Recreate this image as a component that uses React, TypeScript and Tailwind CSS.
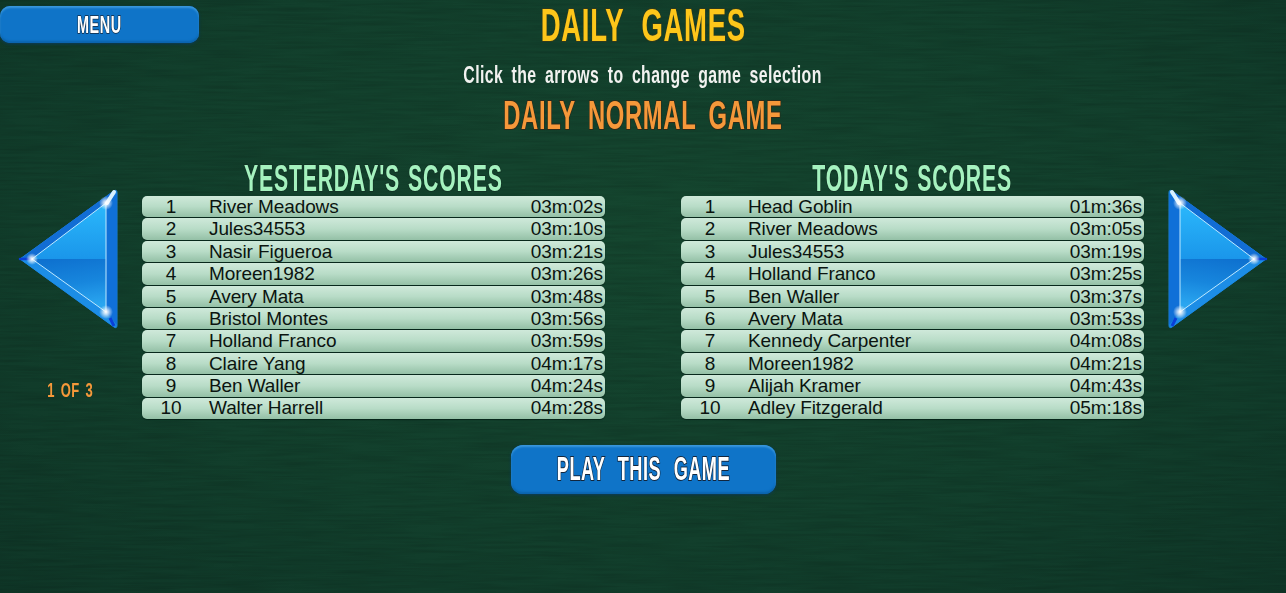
const yesterday: [string, string][] = [
  ["River Meadows", "03m:02s"],
  ["Jules34553", "03m:10s"],
  ["Nasir Figueroa", "03m:21s"],
  ["Moreen1982", "03m:26s"],
  ["Avery Mata", "03m:48s"],
  ["Bristol Montes", "03m:56s"],
  ["Holland Franco", "03m:59s"],
  ["Claire Yang", "04m:17s"],
  ["Ben Waller", "04m:24s"],
  ["Walter Harrell", "04m:28s"],
];
const today: [string, string][] = [
  ["Head Goblin", "01m:36s"],
  ["River Meadows", "03m:05s"],
  ["Jules34553", "03m:19s"],
  ["Holland Franco", "03m:25s"],
  ["Ben Waller", "03m:37s"],
  ["Avery Mata", "03m:53s"],
  ["Kennedy Carpenter", "04m:08s"],
  ["Moreen1982", "04m:21s"],
  ["Alijah Kramer", "04m:43s"],
  ["Adley Fitzgerald", "05m:18s"],
];

function Arrow({ flip }: { flip?: boolean }) {
  const id = flip ? "r" : "l";
  return (
    <svg viewBox="0 0 100 142" className={flip ? "block w-[100px] h-[142px] -scale-x-100 blur-[0.4px]" : "block w-[100px] h-[142px] blur-[0.4px]"}>
      <defs>
        <linearGradient id={id + "up"} x1="0" y1="0" x2="0" y2="1">
          <stop offset="0" stopColor="#2bb8fc" />
          <stop offset="1" stopColor="#1a96ea" />
        </linearGradient>
        <linearGradient id={id + "down"} x1="0" y1="0" x2="0.2" y2="1">
          <stop offset="0" stopColor="#0d6fce" />
          <stop offset="0.55" stopColor="#1786dd" />
          <stop offset="1" stopColor="#2aa6f0" />
        </linearGradient>
        <radialGradient id={id + "glow"}>
          <stop offset="0" stopColor="#ffffff" />
          <stop offset="0.35" stopColor="#ffffff" stopOpacity="0.7" />
          <stop offset="1" stopColor="#ffffff" stopOpacity="0" />
        </radialGradient>
      </defs>
      <path d="M2 71 L96 3 Q99 1 99 5 L99 137 Q99 141 96 139 Z" fill="#1a85e0" stroke="#1a85e0" strokeWidth="1" strokeLinejoin="round" />
      <path d="M2 71 L95 3 L88 15 L14 71 Z" fill="#126dd4" />
      <path d="M2 71 L14 71 L88 124 L96 139 Z" fill="#1c8de6" />
      <path d="M99 5 L99 137 L88 124 L88 15 Z" fill="#1070d8" />
      <path d="M14 71 L88 15 L88 71 Z" fill={`url(#${id}up)`} />
      <path d="M14 71 L88 71 L88 124 Z" fill={`url(#${id}down)`} />
      <path d="M14 71 L88 15 L88 124 Z" fill="none" stroke="#bfe9ff" strokeWidth="1" strokeLinejoin="round" />
      <path d="M2 71 L12 71" stroke="#0a3fd8" strokeWidth="2.5" strokeLinecap="round" />
      <path d="M92 130 L96 138" stroke="#0a3fd8" strokeWidth="3" />
      <path d="M89 15 L96 4" stroke="#d8f0ff" strokeWidth="4" strokeLinecap="round" />
      <circle cx="14" cy="71" r="6" fill={`url(#${id}glow)`} />
      <circle cx="88" cy="15" r="7" fill={`url(#${id}glow)`} />
      <circle cx="88" cy="124" r="7" fill={`url(#${id}glow)`} />
    </svg>
  );
}

function ScoreTable({ title, rows }: { title: string; rows: [string, string][] }) {
  return (
    <div className="w-[463px]">
      <div className="h-[35px] flex justify-center">
        <h2 className="h-[35px] inline-block scale-x-[0.59] whitespace-nowrap font-['Liberation_Sans',sans-serif] font-bold text-[36px] leading-[35px] text-[#a5f2bf] tracking-[1.4px] [word-spacing:2px] [paint-order:stroke_fill] [-webkit-text-stroke:2px_#123325]">
          {title}
        </h2>
      </div>
      <div className="flex flex-col gap-px font-['Liberation_Sans',sans-serif] text-[19px] tracking-[-0.1px] text-[#0b1410]">
        {rows.map(([name, time], i) => (
          <div
            key={name}
            className="flex items-center pt-px h-[21.4px] rounded-[5px] bg-gradient-to-b from-[#cfe9da] via-[#b8dcc7] to-[#94c0a6] shadow-[0_1px_1px_#07251a]"
          >
            <span className="w-[58px] text-center">{i + 1}</span>
            <span className="ml-[9px] flex-1">{name}</span>
            <span className="mr-[2px]">{time}</span>
          </div>
        ))}
      </div>
    </div>
  );
}

const display = "font-['Liberation_Sans',sans-serif]";
const blueButton =
  "flex items-center justify-center bg-[#0f74c8] shadow-[inset_0_2px_2px_#3a97dc,inset_0_-2px_2px_#0c64ad,0_1px_3px_#0b3b5c]";

export default function App() {
  return (
    <div className="relative w-[1286px] h-[593px] overflow-hidden bg-[radial-gradient(ellipse_at_50%_40%,#15462f_0%,#123f2c_60%,#0f3627_100%)]">
      <svg className="absolute inset-0 w-full h-full pointer-events-none opacity-[0.14]">
        <filter id="grain">
          <feTurbulence type="fractalNoise" baseFrequency="0.015 0.35" numOctaves="3" seed="4" />
          <feColorMatrix values="0 0 0 0 0  0 0 0 0 0  0 0 0 0 0  1.6 0 0 0 -0.55" />
        </filter>
        <rect width="100%" height="100%" filter="url(#grain)" />
      </svg>

      <div className="relative">
        <div className="grid grid-cols-[200px_1fr_200px]">
          <div className="pt-[6px]">
            <button className={`${blueButton} w-[199px] h-[37px] rounded-[10px]`}>
              <span className={`${display} inline-block scale-x-[0.6] font-bold text-[24px] leading-[30px] text-white tracking-[1px] [paint-order:stroke_fill] [-webkit-text-stroke:1.5px_#12263d]`}>
                MENU
              </span>
            </button>
          </div>
          <div className="flex flex-col items-center">
            <h1 className={`${display} h-[48px] inline-block scale-x-[0.585] whitespace-nowrap font-bold text-[47px] leading-[50px] text-[#fdc61a] tracking-[1.2px] [word-spacing:16px] [paint-order:stroke_fill] [-webkit-text-stroke:2px_#2d3a1e]`}>
              DAILY GAMES
            </h1>
            <p className={`${display} mt-[10px] h-[34px] inline-block scale-x-[0.66] whitespace-nowrap font-bold text-[24px] leading-[34px] text-[#f2f2f0] tracking-[0.6px] [word-spacing:5.5px]`}>
              Click the arrows to change game selection
            </p>
            <h2 className={`${display} mt-[1px] h-[44px] inline-block scale-x-[0.58] whitespace-nowrap font-bold text-[41px] leading-[44px] text-[#f5983a] tracking-[1.2px] [word-spacing:9px] [paint-order:stroke_fill] [-webkit-text-stroke:2px_#2d2a1a]`}>
              DAILY NORMAL GAME
            </h2>
          </div>
          <div />
        </div>

        <div className="mt-[24px] flex items-start">
          <div className="w-[142px] pl-[18px] pt-[27px]">
            <Arrow />
            <div className="mt-[48px] w-[104px] flex justify-center">
              <span className={`${display} inline-block scale-x-[0.62] whitespace-nowrap font-bold text-[21px] leading-[24px] text-[#f5983a] tracking-[0.7px] [word-spacing:3px]`}>
                1 OF 3
              </span>
            </div>
          </div>
          <ScoreTable title="YESTERDAY'S SCORES" rows={yesterday} />
          <div className="w-[76px]" />
          <ScoreTable title="TODAY'S SCORES" rows={today} />
          <div className="ml-[24px] pt-[27px]">
            <Arrow flip />
          </div>
        </div>

        <div className="mt-[26px] flex justify-center">
          <button className={`${blueButton} w-[265px] h-[49px] rounded-[12px]`}>
            <span className={`${display} inline-block scale-x-[0.55] whitespace-nowrap font-bold text-[33px] leading-[44px] text-white tracking-[0.85px] [word-spacing:13px] [paint-order:stroke_fill] [-webkit-text-stroke:2px_#12263d]`}>
              PLAY THIS GAME
            </span>
          </button>
        </div>
      </div>
    </div>
  );
}
